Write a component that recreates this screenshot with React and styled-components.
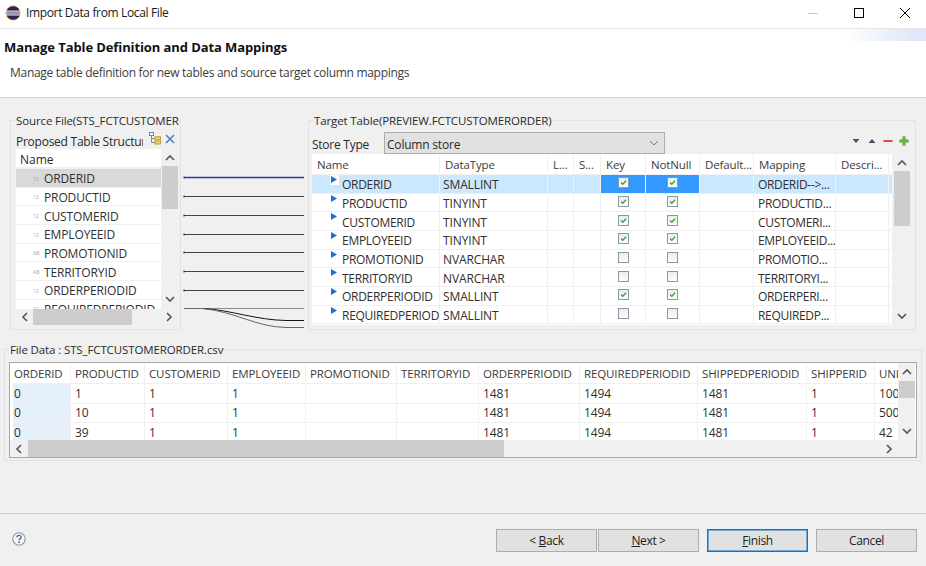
import React from "react";
import styled, { createGlobalStyle, css } from "styled-components";

const FONT = `"Open Sans", "Noto Sans", "Liberation Sans", sans-serif`;

const Global = createGlobalStyle`
  html, body { margin: 0; padding: 0; background: #f0f0f0; }
  body { font-family: ${FONT}; font-size: 12px; color: #222; }
  * { box-sizing: border-box; }
`;

const Window = styled.div`
  width: 926px; height: 566px; display: flex; flex-direction: column; overflow: hidden; background: #f0f0f0;
`;
const TitleBar = styled.div`
  height: 29px; flex: none; background: #fff; border-bottom: 1px solid #e6e6e6;
  display: flex; align-items: center; padding: 0 16px 3px 5px;
`;
const TitleText = styled.div`
  margin-left: 5px; font-size: 12px; color: #1a1a1a; flex: 1; letter-spacing: -0.36px;
`;
const WinControls = styled.div`
  display: flex; align-items: center; gap: 36px;
`;
const Header = styled.div`
  position: relative; height: 69px; flex: none; background: #fff; border-bottom: 1px solid #cfcfcf;
  display: flex; flex-direction: column;
`;
const Banner = styled.div`
  position: absolute; right: 0; top: 0; width: 90px; height: 12px;
  background: linear-gradient(100deg, #ffffff 10%, #dfe7f8 85%);
`;
const Heading = styled.div`
  margin: 10px 0 0 4px; font-weight: 700; font-size: 13px; color: #111; letter-spacing: -0.1px; line-height: 16px;
`;
const Subtitle = styled.div`
  margin: 10px 0 0 10px; font-size: 12px; color: #3c3c3c; line-height: 16px; letter-spacing: -0.29px;
`;
const Body = styled.div`
  flex: 1; display: flex; flex-direction: column; background: #f0f0f0; min-height: 0;
`;
const TopRow = styled.div`
  display: flex; margin: 22px 0 0 10px; height: 210px; flex: none;
`;
const Group = styled.div`
  position: relative; flex: none; border: 1px solid #e2e2e2;
  ${(p) => css`width: ${p.$w}px; height: ${p.$h}px; padding: ${p.$pad};`}
`;
const GroupLabel = styled.div`
  position: absolute; top: -8px; left: ${(p) => p.$left || 4}px; padding: 0 1px; background: #f0f0f0;
  font-size: 11.5px; line-height: 16px; white-space: nowrap; color: #2a2a2a; letter-spacing: -0.12px;
  max-width: ${(p) => p.$max || 900}px; overflow: hidden;
`;
const ProposedBar = styled.div`
  height: 18px; display: flex; align-items: center;
`;
const ProposedTitle = styled.div`
  width: 127px; white-space: nowrap; overflow: hidden; color: #2a2a2a; letter-spacing: -0.25px; margin: 2px 6px 0 0;
`;
const ListRow = styled.div`
  display: flex; gap: 1px;
`;
const ListBody = styled.div`
  background: #fff; overflow: hidden; flex: none;
  ${(p) => css`width: ${p.$w}px; height: ${p.$h}px;`}
`;
const SrcHead = styled.div`
  height: 20px; padding: 3px 0 0 4px; display: flex; align-items: center; color: #2a2a2a; border-bottom: 2px solid #f0f0f0;
`;
const SrcRow = styled.div`
  height: 18.67px; display: flex; align-items: center; padding: 2px 0 0 17px; flex: none; white-space: nowrap;
  border-bottom: 1.5px solid #f0f0f0; letter-spacing: -0.12px; color: #2f2f2f;
  background: ${(p) => (p.$sel ? "#d9d9d9" : "#fff")};
`;
const TypeIcon = styled.span`
  width: 11px; font-size: 5px; color: #9aa4b0; flex: none; letter-spacing: 0;
`;

const VTrack = styled.div`
  flex: none; width: 16px; display: flex; flex-direction: column; background: #f0f0f0;
  height: ${(p) => p.$h}px;
`;
const VCap = styled.div`
  flex: none; height: ${(p) => p.$h}px; display: flex; align-items: center; justify-content: center;
`;
const VThumb = styled.div`
  flex: none; background: #cdcdcd; height: ${(p) => p.$h}px;
`;
const VRest = styled.div`
  flex: 1; display: flex; align-items: flex-end; justify-content: center; padding-bottom: ${(p) => p.$pb}px;
`;
const HTrack = styled.div`
  display: flex; align-items: center; height: ${(p) => p.$h || 16}px; background: #f0f0f0; flex: none;
  width: ${(p) => p.$w}px;
`;
const HCap = styled.div`
  flex: none; width: ${(p) => p.$w}px; display: flex; align-items: center; justify-content: center; height: 100%;
`;
const HThumb = styled.div`
  flex: none; height: 100%; background: #cdcdcd; width: ${(p) => p.$w}px;
`;
const HRest = styled.div`
  flex: 1; height: 100%; display: flex; align-items: center; justify-content: flex-end; padding-right: ${(p) => p.$pr}px;
`;

const Connector = styled.svg`
  flex: none; display: block; width: 127px; height: 210px;
`;
const StoreRow = styled.div`
  height: 22px; display: flex; align-items: center;
`;
const StoreLabel = styled.div`
  width: 72px; color: #2a2a2a; letter-spacing: -0.25px; margin-top: 2px;
`;
const Select = styled.div`
  width: 281px; height: 22px; background: #e1e1e1; border: 1px solid #adadad; display: flex; align-items: center;
  justify-content: space-between; padding: 0 5px 0 2px; color: #2a2a2a; letter-spacing: -0.2px;
`;
const LoweredText = styled.span`
  margin-top: 2px; letter-spacing: ${(p) => p.$ls ?? "inherit"};
`;
const Tools = styled.div`
  margin-left: auto; display: flex; align-items: center; gap: 6px; padding: 0 6px 4px 0;
`;
const TableRow = styled.div`
  display: grid; flex: none;
  grid-template-columns: ${(p) => p.$cols};
  height: ${(p) => p.$h}px;
  background: ${(p) => (p.$sel ? "#cce8ff" : "#fff")};
  ${(p) => p.$line && css`border-bottom: 1.5px solid #f0f0f0;`}
`;
const Cell = styled.div`
  display: flex; align-items: center; white-space: nowrap; overflow: hidden; min-width: 0;
  justify-content: ${(p) => (p.$center ? "center" : "flex-start")};
  padding-left: ${(p) => p.$pl ?? 3}px;
  border-right: 1.5px solid #f0f0f0;
  letter-spacing: -0.12px; color: #2f2f2f;
  background: ${(p) => (p.$hl ? "#3399ff" : p.$tint ? "#e5f0fb" : "transparent")};
`;
const HeadCell = styled(Cell)`
  padding-left: ${(p) => p.$pl ?? 5}px; color: #3a3a3a; font-size: 11.5px;
`;
const Marker = styled.span`
  width: 12px; flex: none; height: 100%; display: flex; align-items: flex-start;
`;
const MarkerTile = styled.span`
  width: 9px; height: 10px; padding: 1px 0 0 1px; display: block;
  background: ${(p) => (p.$sel ? "#fff" : "transparent")};
`;
const CheckBoxBox = styled.span`
  width: 11px; height: 11px; margin-bottom: 2px; border: 1px solid #8c98a4; background: linear-gradient(#ececec, #fff); display: block; flex: none;
`;
const FileGroupWrap = styled.div`
  margin: 19px 0 0 4px;
`;
const FileBox = styled.div`
  width: 908px; height: 96px; border: 1px solid #a8a8a8; background: #fff; display: flex; flex-direction: column;
`;
const FileTop = styled.div`
  display: flex; height: 77px; flex: none; padding-left: 3px;
`;
const FileColumn = styled.div`
  width: 886px; flex: none; overflow: hidden; display: flex; flex-direction: column;
`;
const Footer = styled.div`
  margin-top: auto; height: 53px; flex: none; border-top: 1px solid #cfcfcf; padding: 15px 9px 0 12px; display: flex; align-items: flex-start;
`;
const HelpWrap = styled.div`
  margin-top: 3px; margin-right: auto;
`;
const Button = styled.button`
  width: 101px; height: 23px; background: #e1e1e1; border: 1px solid ${(p) => (p.$default ? "#0078d7" : "#adadad")};
  ${(p) => p.$default && "box-shadow: inset 0 0 0 0.5px #0078d7;"}
  margin-left: ${(p) => p.$gap}px; font-family: ${FONT}; font-size: 12px; color: #222; padding: 0; letter-spacing: -0.35px;
`;

const Chevron = ({ dir, light }) => {
  const pts = {
    up: "1,6 5,2 9,6",
    down: "1,2 5,6 9,2",
    left: "6,1 2,5 6,9",
    right: "2,1 6,5 2,9",
  }[dir];
  const vertical = dir === "up" || dir === "down";
  return (
    <svg width={vertical ? 10 : 8} height={vertical ? 8 : 10} viewBox={vertical ? "0 0 10 8" : "0 0 8 10"}>
      <polyline points={pts} fill="none" stroke={light ? "#777" : "#555"} strokeWidth={light ? 1 : 1.6} />
    </svg>
  );
};

const VScroll = ({ h, top, thumb, pb = 4 }) => (
  <VTrack $h={h}>
    <VCap $h={top}><Chevron dir="up" /></VCap>
    <VThumb $h={thumb} />
    <VRest $pb={pb}><Chevron dir="down" /></VRest>
  </VTrack>
);
const HScroll = ({ w, left, thumb, pr, h }) => (
  <HTrack $w={w} $h={h}>
    <HCap $w={left}><Chevron dir="left" /></HCap>
    <HThumb $w={thumb} />
    <HRest $pr={pr}><Chevron dir="right" /></HRest>
  </HTrack>
);

const EclipseLogo = () => (
  <svg width="16" height="16" viewBox="0 0 16 16">
    <circle cx="8" cy="8" r="7.5" fill="#e8a33a" />
    <circle cx="8.2" cy="8" r="6.8" fill="#2c2255" />
    <rect x="0.8" y="5.6" width="14.4" height="1.1" fill="#f2f2f8" />
    <rect x="0.6" y="7.5" width="14.8" height="1.1" fill="#f2f2f8" />
    <rect x="0.9" y="9.4" width="14.2" height="1.1" fill="#f2f2f8" />
  </svg>
);
const WinButtons = () => (
  <WinControls>
    <svg width="10" height="10" viewBox="0 0 10 10"><rect x="0" y="5" width="10" height="1" fill="#c8c8c8" /></svg>
    <svg width="10" height="10" viewBox="0 0 10 10"><rect x="0.5" y="0.5" width="9" height="9" fill="none" stroke="#000" /></svg>
    <svg width="10" height="10" viewBox="0 0 10 10"><path d="M0 0L10 10M10 0L0 10" stroke="#000" strokeWidth="1" /></svg>
  </WinControls>
);
const TreeIcon = () => (
  <svg width="12" height="13" viewBox="0 0 12 13" style={{ marginRight: 4, marginBottom: 3 }}>
    <rect x="0.5" y="0.5" width="4" height="3" fill="#fff" stroke="#4f8fb5" />
    <path d="M2.5 4V10.5H6M2.5 6.5H6" fill="none" stroke="#7a8fa0" />
    <rect x="6" y="4.8" width="5.5" height="3" fill="#f3d36a" stroke="#c49a2c" />
    <rect x="6" y="9" width="5.5" height="3" fill="#f3d36a" stroke="#c49a2c" />
  </svg>
);
const CloseX = () => (
  <svg width="10" height="10" viewBox="0 0 10 10" style={{ marginBottom: 3 }}><path d="M1 1L9 9M9 1L1 9" stroke="#4a86c5" strokeWidth="1.7" /></svg>
);
const DownTri = () => (
  <svg width="10" height="6" viewBox="0 0 10 6"><path d="M1.5 1H8.5L5 5Z" fill="#4d4d70" /></svg>
);
const UpTri = () => (
  <svg width="10" height="6" viewBox="0 0 10 6"><path d="M1.5 5H8.5L5 1Z" fill="#4d4d70" /></svg>
);
const Minus = () => (
  <svg width="10" height="6" viewBox="0 0 10 6"><rect x="0.5" y="2" width="9" height="2" fill="#e5484d" /></svg>
);
const Plus = () => (
  <svg width="10" height="10" viewBox="0 0 10 10"><path d="M3.5 0.5H6.5V3.5H9.5V6.5H6.5V9.5H3.5V6.5H0.5V3.5H3.5Z" fill="#6fae45" stroke="#8cc06a" strokeWidth="0.5" /></svg>
);
const Triangle = () => (
  <svg width="7" height="8" viewBox="0 0 7 8" style={{ display: "block" }}><path d="M0 0L6 3.5L0 7Z" fill="#1673d1" /></svg>
);
const Check = ({ on }) => (
  <CheckBoxBox>
    {on && (
      <svg width="9" height="9" viewBox="0 0 9 9" style={{ display: "block" }}>
        <path d="M2 4.5L3.8 6.3L7 2.7" fill="none" stroke="#35a835" strokeWidth="1.4" />
      </svg>
    )}
  </CheckBoxBox>
);
const HelpIcon = () => (
  <svg width="14" height="14" viewBox="0 0 14 14">
    <circle cx="7" cy="7" r="6.2" fill="#f4f6f9" stroke="#8a98ac" strokeWidth="1.1" />
    <path d="M4.9 5.3C4.9 4 5.9 3.4 7 3.4C8.2 3.4 9.1 4.1 9.1 5.2C9.1 6.6 7.1 6.6 7.1 8.3" fill="none" stroke="#5d6a80" strokeWidth="1.4" />
    <rect x="6.3" y="9.4" width="1.6" height="1.6" fill="#5d6a80" />
  </svg>
);

const SOURCE = [
  ["12", "ORDERID"], ["12", "PRODUCTID"], ["12", "CUSTOMERID"], ["12", "EMPLOYEEID"],
  ["AB", "PROMOTIONID"], ["AB", "TERRITORYID"], ["12", "ORDERPERIODID"], ["12", "REQUIREDPERIODID"],
];
const TARGET_COLS = "128px 108px 26px 27px 45px 54px 54px 82px 53px 4px";
const TARGET_HEAD = ["Name", "DataType", "L...", "S...", "Key", "NotNull", "Default...", "Mapping", "Descri..."];
const TARGET = [
  ["ORDERID", "SMALLINT", true, "ORDERID-->..."],
  ["PRODUCTID", "TINYINT", true, "PRODUCTID..."],
  ["CUSTOMERID", "TINYINT", true, "CUSTOMERI..."],
  ["EMPLOYEEID", "TINYINT", true, "EMPLOYEEID..."],
  ["PROMOTIONID", "NVARCHAR", false, "PROMOTIO..."],
  ["TERRITORYID", "NVARCHAR", false, "TERRITORYI..."],
  ["ORDERPERIODID", "SMALLINT", true, "ORDERPERI..."],
  ["REQUIREDPERIOD", "SMALLINT", false, "REQUIREDP..."],
];
const FILE_COLS = "58px 74px 83px 78px 91px 82px 101px 118px 109px 68px 24px";
const FILE_HEAD = ["ORDERID", "PRODUCTID", "CUSTOMERID", "EMPLOYEEID", "PROMOTIONID", "TERRITORYID", "ORDERPERIODID", "REQUIREDPERIODID", "SHIPPEDPERIODID", "SHIPPERID", "UNI"];
const FILE_ROWS = [
  ["0", "1", "1", "1", "", "", "1481", "1494", "1481", "1", "100"],
  ["0", "10", "1", "1", "", "", "1481", "1494", "1481", "1", "500"],
  ["0", "39", "1", "1", "", "", "1481", "1494", "1481", "1", "42"],
];
const LINE_Y = [57.5, 76.5, 95.5, 114.5, 132.5, 151.5, 170.5];

export default function App() {
  return (
    <Window>
      <Global />
      <TitleBar>
        <EclipseLogo />
        <TitleText>Import Data from Local File</TitleText>
        <WinButtons />
      </TitleBar>
      <Header>
        <Banner />
        <Heading>Manage Table Definition and Data Mappings</Heading>
        <Subtitle>Manage table definition for new tables and source target column mappings</Subtitle>
      </Header>
      <Body>
        <TopRow>
          <Group $w={171} $h={210} $pad="10px 0 0 5px">
            <GroupLabel $max={165}>Source File(STS_FCTCUSTOMER</GroupLabel>
            <ProposedBar>
              <ProposedTitle>Proposed Table Structure</ProposedTitle>
              <TreeIcon />
              <CloseX />
            </ProposedBar>
            <ListRow>
              <ListBody $w={145} $h={160}>
                <SrcHead>Name</SrcHead>
                {SOURCE.map(([t, n], i) => (
                  <SrcRow key={n} $sel={i === 0}>
                    <TypeIcon>{t}</TypeIcon>
                    {n}
                  </SrcRow>
                ))}
              </ListBody>
              <VScroll h={160} top={17} thumb={43} pb={6} />
            </ListRow>
            <HScroll w={162} left={17} thumb={99} pr={5} />
          </Group>
          <Connector viewBox="0 0 127 210">
            {LINE_Y.map((y, i) => (
              <g key={y}>
                <line x1="3" x2="123" y1={y} y2={y} stroke={i === 0 ? "#2b3a9a" : "#444"} strokeWidth={i === 0 ? 1.5 : 1} />
                <line x1="3" x2="3" y1={y - 1} y2={y + 1} stroke={i === 0 ? "#2b3a9a" : "#222"} />
              </g>
            ))}
            <line x1="3" x2="123" y1="188.5" y2="188.5" stroke="#8a8a8a" />
            <path d="M3 188.5H22C50 190 75 200 105 200.5H123" fill="none" stroke="#111" strokeWidth="1" />
            <path d="M3 188.5H22C55 192 75 207 105 207.5H123" fill="none" stroke="#666" strokeWidth="1" />
          </Connector>
          <Group $w={608} $h={210} $pad="11px 0 0 3px">
            <GroupLabel>Target Table(PREVIEW.FCTCUSTOMERORDER)</GroupLabel>
            <StoreRow>
              <StoreLabel>Store Type</StoreLabel>
              <Select>
                <LoweredText>Column store</LoweredText>
                <Chevron dir="down" light />
              </Select>
              <Tools>
                <DownTri />
                <UpTri />
                <Minus />
                <Plus />
              </Tools>
            </StoreRow>
            <ListRow>
              <ListBody $w={581} $h={171}>
                <TableRow $cols={TARGET_COLS} $h={21} $line>
                  {TARGET_HEAD.map((h) => <HeadCell key={h}>{h}</HeadCell>)}
                  <HeadCell $pl={0} />
                </TableRow>
                {TARGET.map(([n, t, on, m], i) => (
                  <TableRow key={n} $cols={TARGET_COLS} $h={18.67} $sel={i === 0} $line>
                    <Cell $pl={18}>
                      <Marker><MarkerTile $sel={i === 0}><Triangle /></MarkerTile></Marker>
                      <LoweredText $ls="-0.28px">{n}</LoweredText>
                    </Cell>
                    <Cell><LoweredText>{t}</LoweredText></Cell>
                    <Cell />
                    <Cell />
                    <Cell $center $pl={0} $hl={i === 0}><Check on={on} /></Cell>
                    <Cell $center $pl={0} $hl={i === 0}><Check on={on} /></Cell>
                    <Cell />
                    <Cell $pl={4}><LoweredText $ls="-0.32px">{m}</LoweredText></Cell>
                    <Cell />
                    <Cell $pl={0} />
                  </TableRow>
                ))}
              </ListBody>
              <VScroll h={171} top={17} thumb={55} pb={5} />
            </ListRow>
          </Group>
        </TopRow>
        <FileGroupWrap>
          <Group $w={918} $h={112} $pad="12px 0 0 4px">
            <GroupLabel>File Data : STS_FCTCUSTOMERORDER.csv</GroupLabel>
            <FileBox>
              <FileTop>
                <FileColumn>
                  <TableRow $cols={FILE_COLS} $h={21} $line>
                    {FILE_HEAD.map((h) => <HeadCell key={h} $pl={h === "ORDERID" ? 1 : 4}>{h}</HeadCell>)}
                  </TableRow>
                  {FILE_ROWS.map((r, i) => (
                    <TableRow key={i} $cols={FILE_COLS} $h={19.5} $line>
                      {r.map((c, j) => (
                        <Cell key={j} $tint={j === 0} $pl={j === 0 ? 1 : 4}>{c}</Cell>
                      ))}
                    </TableRow>
                  ))}
                </FileColumn>
                <VScroll h={77} top={18} thumb={17} pb={5} />
              </FileTop>
              <HScroll w={906} left={18} thumb={476} pr={23} h={17} />
            </FileBox>
          </Group>
        </FileGroupWrap>
        <Footer>
          <HelpWrap><HelpIcon /></HelpWrap>
          <Button $gap={0}>&lt; <u>B</u>ack</Button>
          <Button $gap={1}><u>N</u>ext &gt;</Button>
          <Button $gap={8} $default><u>F</u>inish</Button>
          <Button $gap={8}>Cancel</Button>
        </Footer>
      </Body>
    </Window>
  );
}
